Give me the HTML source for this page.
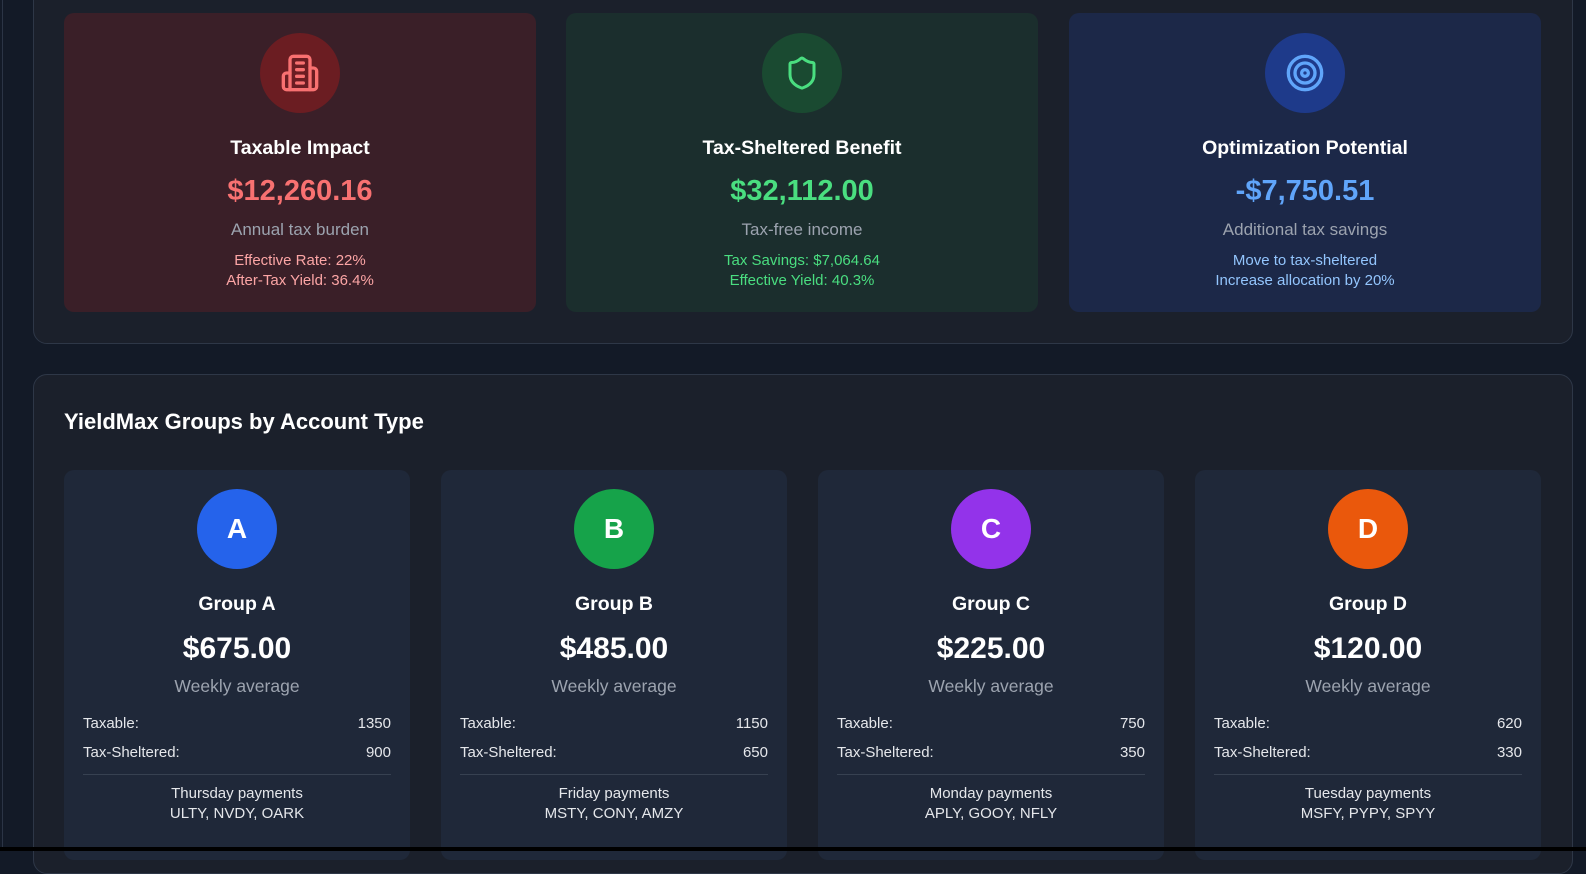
<!DOCTYPE html>
<html><head><meta charset="utf-8"><style>
*{box-sizing:border-box;margin:0;padding:0}
body{width:1586px;height:851px;overflow:hidden;background:#131a27;font-family:"Liberation Sans",sans-serif;position:relative}
.edge{position:absolute;left:2px;top:0;width:1px;height:847px;background:#2b3445}
.bottom{position:absolute;left:0;top:847px;width:1586px;height:4px;background:#000}
.panel{position:absolute;left:33px;width:1540px;background:#1b202b;border:1px solid #2e3747;border-radius:14px}
.card{position:absolute;width:472px;height:299px;border-radius:10px;text-align:center}
.ic{width:80px;height:80px;border-radius:50%;margin:20px auto 0;display:flex;align-items:center;justify-content:center}
.t{color:#fff;font-weight:bold;font-size:19.5px;margin-top:24px}
.v{font-weight:bold;font-size:29px;margin-top:15px}
.s{color:#9ca3af;font-size:17px;margin-top:12px}
.d{font-size:15px;line-height:20px;margin-top:11px}
.g{position:absolute;top:95px;width:346px;height:390px;background:#1f2839;border-radius:10px;text-align:center}
.c{width:80px;height:80px;border-radius:50%;margin:19px auto 0;color:#fff;font-weight:bold;font-size:28px;line-height:80px}
.gt{color:#fff;font-weight:bold;font-size:19.5px;margin-top:24px}
.gv{color:#fff;font-weight:bold;font-size:30px;margin-top:16px}
.gs{color:#9ca3af;font-size:17.5px;margin-top:10px}
.row{display:flex;justify-content:space-between;margin:0 19px;color:#e5e7eb;font-size:15px}
.hr{margin:13px 19px 0;border-top:1px solid #374151}
.p{color:#e5e7eb;font-size:15px;line-height:20px;margin-top:9px}
</style></head><body>
<div class="edge"></div>
<div class="panel" style="top:-20px;height:364px">
 <div class="card" style="left:30px;top:32px;background:#3a1f28">
  <div class="ic" style="background:#6b1d22"><svg width="40" height="40" viewBox="0 0 24 24" fill="none" stroke="#f87171" stroke-width="2" stroke-linecap="round" stroke-linejoin="round"><path d="M6 22V4a2 2 0 0 1 2-2h8a2 2 0 0 1 2 2v18Z"/><path d="M6 12H4a2 2 0 0 0-2 2v6a2 2 0 0 0 2 2h2"/><path d="M18 9h2a2 2 0 0 1 2 2v9a2 2 0 0 1-2 2h-2"/><path d="M10 6h4M10 10h4M10 14h4M10 18h4"/></svg></div>
  <div class="t">Taxable Impact</div><div class="v" style="color:#f87171">$12,260.16</div>
  <div class="s">Annual tax burden</div><div class="d" style="color:#fca5a5">Effective Rate: 22%<br>After-Tax Yield: 36.4%</div>
 </div>
 <div class="card" style="left:532px;top:32px;background:#1b2e2d">
  <div class="ic" style="background:#1a4a31"><svg width="36" height="36" viewBox="0 0 24 24" fill="none" stroke="#4ade80" stroke-width="2" stroke-linejoin="round"><path d="M20 13c0 5-3.5 7.5-7.7 9a1 1 0 0 1-.6 0C7.5 20.5 4 18 4 13V6a1 1 0 0 1 1-1c2 0 4.5-1.2 6.2-2.7a1.2 1.2 0 0 1 1.5 0C14.5 3.8 17 5 19 5a1 1 0 0 1 1 1z"/></svg></div>
  <div class="t">Tax-Sheltered Benefit</div><div class="v" style="color:#4ade80">$32,112.00</div>
  <div class="s">Tax-free income</div><div class="d" style="color:#4ade80">Tax Savings: $7,064.64<br>Effective Yield: 40.3%</div>
 </div>
 <div class="card" style="left:1035px;top:32px;background:#1c2848">
  <div class="ic" style="background:#1e3a8a"><svg width="40" height="40" viewBox="0 0 24 24" fill="none" stroke="#60a5fa" stroke-width="2"><circle cx="12" cy="12" r="10"/><circle cx="12" cy="12" r="6"/><circle cx="12" cy="12" r="2"/></svg></div>
  <div class="t">Optimization Potential</div><div class="v" style="color:#60a5fa">-$7,750.51</div>
  <div class="s">Additional tax savings</div><div class="d" style="color:#93c5fd">Move to tax-sheltered<br>Increase allocation by 20%</div>
 </div>
</div>
<div class="panel" style="top:374px;height:500px">
 <div style="position:absolute;left:30px;top:34px;color:#fff;font-weight:bold;font-size:22px">YieldMax Groups by Account Type</div>
 <div class="g" style="left:30px"><div class="c" style="background:#2563eb">A</div><div class="gt">Group A</div><div class="gv">$675.00</div><div class="gs">Weekly average</div>
  <div class="row" style="margin-top:18px"><span>Taxable:</span><span>1350</span></div><div class="row" style="margin-top:12px"><span>Tax-Sheltered:</span><span>900</span></div><div class="hr"></div><div class="p">Thursday payments<br>ULTY, NVDY, OARK</div></div>
 <div class="g" style="left:407px"><div class="c" style="background:#16a34a">B</div><div class="gt">Group B</div><div class="gv">$485.00</div><div class="gs">Weekly average</div>
  <div class="row" style="margin-top:18px"><span>Taxable:</span><span>1150</span></div><div class="row" style="margin-top:12px"><span>Tax-Sheltered:</span><span>650</span></div><div class="hr"></div><div class="p">Friday payments<br>MSTY, CONY, AMZY</div></div>
 <div class="g" style="left:784px"><div class="c" style="background:#9333ea">C</div><div class="gt">Group C</div><div class="gv">$225.00</div><div class="gs">Weekly average</div>
  <div class="row" style="margin-top:18px"><span>Taxable:</span><span>750</span></div><div class="row" style="margin-top:12px"><span>Tax-Sheltered:</span><span>350</span></div><div class="hr"></div><div class="p">Monday payments<br>APLY, GOOY, NFLY</div></div>
 <div class="g" style="left:1161px"><div class="c" style="background:#ea580c">D</div><div class="gt">Group D</div><div class="gv">$120.00</div><div class="gs">Weekly average</div>
  <div class="row" style="margin-top:18px"><span>Taxable:</span><span>620</span></div><div class="row" style="margin-top:12px"><span>Tax-Sheltered:</span><span>330</span></div><div class="hr"></div><div class="p">Tuesday payments<br>MSFY, PYPY, SPYY</div></div>
</div>
<div class="bottom"></div>
</body></html>
